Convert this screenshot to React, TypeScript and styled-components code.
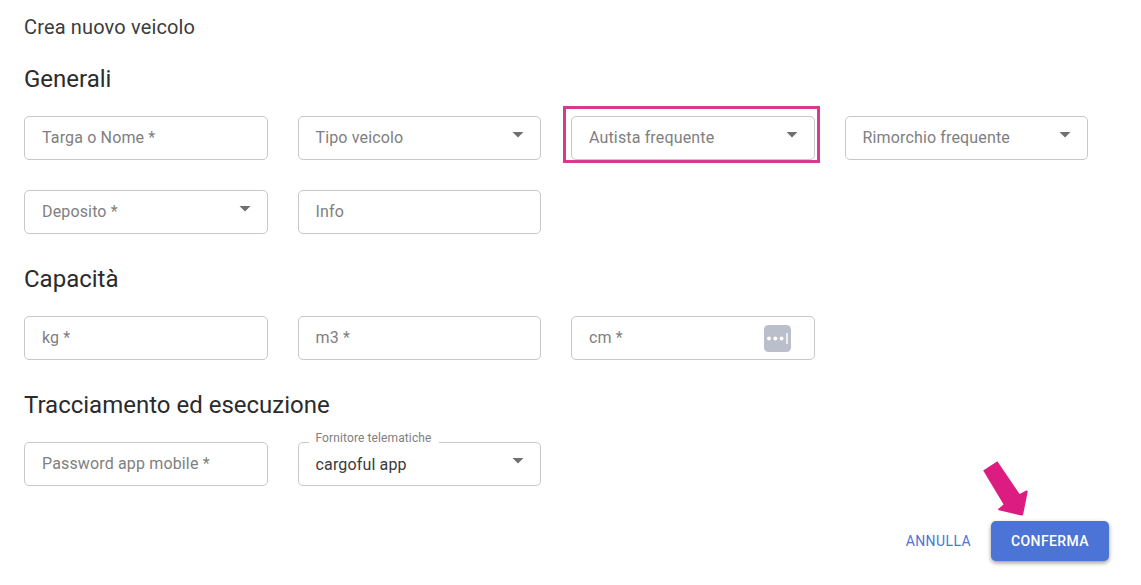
import React, { useId, useState } from "react";
import styled, { createGlobalStyle, css } from "styled-components";

const GlobalStyle = createGlobalStyle`
  *, *::before, *::after { box-sizing: border-box; }
  body {
    margin: 0;
    background: #fff;
    color: #2b2b2b;
    font-family: Roboto, "Liberation Sans", sans-serif;
  }
`;

const Form = styled.form`
  display: flex;
  flex-direction: column;
  padding: 15px 32px 24px 24px;
`;

const Title = styled.h1`
  margin: 0 0 25px;
  font-size: 20px;
  line-height: 24px;
  font-weight: 400;
  letter-spacing: 0.0075em;
  color: #3c3c3c;
`;

const Section = styled.section`
  margin: 0 21px 30px 0;
`;

const SectionTitle = styled.h2`
  margin: 0 0 22px;
  font-size: 24px;
  line-height: 30px;
  font-weight: 400;
`;

const Fields = styled.div`
  display: grid;
  grid-template-columns: repeat(4, minmax(0, 1fr));
  gap: 30px;
`;

const FieldBox = styled.div<{ $highlighted?: boolean }>`
  position: relative;
  display: grid;
  height: 44px;
  border: 1px solid #c8c8c8;
  border-radius: 5px;

  ${(p) =>
    p.$highlighted &&
    css`
      &::after {
        content: "";
        position: absolute;
        inset: -11px -6px -4px -9px;
        border: 3px solid #d9388f;
        pointer-events: none;
      }
    `}

  & > * {
    grid-area: 1 / 1;
  }
`;

const controlStyle = css`
  width: 100%;
  min-width: 0;
  padding: 0 17px;
  border: 0;
  outline: 0;
  border-radius: 4px;
  background: transparent;
  color: #3a3a3a;
  font: inherit;
  font-size: 16px;
  letter-spacing: 0.00938em;
`;

const TextInput = styled.input`
  ${controlStyle}
`;

const SelectInput = styled.select`
  ${controlStyle}
  appearance: none;
  cursor: pointer;
`;

const FieldLabel = styled.label<{ $floating: boolean }>`
  align-self: center;
  justify-self: start;
  margin-left: 17px;
  font-size: 16px;
  line-height: 20px;
  letter-spacing: 0.00938em;
  color: #808080;
  white-space: nowrap;
  pointer-events: none;

  ${(p) =>
    p.$floating &&
    css`
      position: absolute;
      top: -13px;
      left: 10px;
      margin: 0;
      padding: 0 7px;
      background: #fff;
      font-size: 12px;
      line-height: 16px;
    `}
`;

const Caret = styled.svg`
  align-self: start;
  justify-self: end;
  margin: 15px 16px 0 0;
  pointer-events: none;
`;

const PinBadge = styled.svg`
  align-self: center;
  justify-self: end;
  margin-right: 23px;
`;

const Actions = styled.div`
  display: flex;
  justify-content: flex-end;
  gap: 4px;
  margin-top: 5px;
`;

const Button = styled.button<{ $primary?: boolean }>`
  position: relative;
  height: 40px;
  padding: 0 ${(p) => (p.$primary ? 20 : 16)}px;
  border: 0;
  border-radius: 5px;
  background: ${(p) => (p.$primary ? "#4b74d6" : "transparent")};
  color: ${(p) => (p.$primary ? "#fff" : "#4b74d6")};
  box-shadow: ${(p) => (p.$primary ? "0 2px 4px rgba(0, 0, 0, 0.4)" : "none")};
  font: inherit;
  font-size: 14px;
  font-weight: ${(p) => (p.$primary ? 500 : 400)};
  letter-spacing: 0.02857em;
  text-transform: uppercase;
  cursor: pointer;
`;

const Pointer = styled.svg`
  position: absolute;
  left: -9px;
  bottom: 100%;
  margin-bottom: 5px;
  overflow: visible;
`;

type FieldProps = {
  label: string;
  required?: boolean;
  type?: string;
  options?: string[];
  initial?: string;
  highlighted?: boolean;
  badge?: boolean;
};

function Field({ label, required, type = "text", options, initial = "", highlighted, badge }: FieldProps) {
  const id = useId();
  const [value, setValue] = useState(initial);
  return (
    <FieldBox $highlighted={highlighted}>
      {options ? (
        <>
          <SelectInput id={id} required={required} value={value} onChange={(e) => setValue(e.target.value)}>
            <option value="" />
            {options.map((o) => (
              <option key={o}>{o}</option>
            ))}
          </SelectInput>
          <Caret width="12" height="6" viewBox="0 0 12 6" aria-hidden="true">
            <path d="M0.5 0h11L6 5.5z" fill="#707070" />
          </Caret>
        </>
      ) : (
        <TextInput id={id} type={type} required={required} value={value} onChange={(e) => setValue(e.target.value)} />
      )}
      <FieldLabel htmlFor={id} $floating={value !== ""}>
        {label}
        {required && " *"}
      </FieldLabel>
      {badge && (
        <PinBadge width="27" height="27" viewBox="0 0 27 27" aria-hidden="true">
          <rect width="27" height="27" rx="4.5" fill="#bbbfcb" />
          <g fill="#fff">
            <circle cx="5" cy="13.5" r="1.9" />
            <circle cx="11.3" cy="13.5" r="1.9" />
            <circle cx="17.6" cy="13.5" r="1.9" />
            <rect x="22.3" y="8" width="1.4" height="11" />
          </g>
        </PinBadge>
      )}
    </FieldBox>
  );
}

export default function App() {
  return (
    <>
      <GlobalStyle />
      <Form onSubmit={(e) => e.preventDefault()}>
        <Title>Crea nuovo veicolo</Title>

        <Section>
          <SectionTitle>Generali</SectionTitle>
          <Fields>
            <Field label="Targa o Nome" required />
            <Field label="Tipo veicolo" options={[]} />
            <Field label="Autista frequente" options={[]} highlighted />
            <Field label="Rimorchio frequente" options={[]} />
            <Field label="Deposito" required options={[]} />
            <Field label="Info" />
          </Fields>
        </Section>

        <Section>
          <SectionTitle>Capacità</SectionTitle>
          <Fields>
            <Field label="kg" required />
            <Field label="m3" required />
            <Field label="cm" required badge />
          </Fields>
        </Section>

        <Section>
          <SectionTitle>Tracciamento ed esecuzione</SectionTitle>
          <Fields>
            <Field label="Password app mobile" required type="password" />
            <Field label="Fornitore telematiche" options={["cargoful app"]} initial="cargoful app" />
          </Fields>
        </Section>

        <Actions>
          <Button type="button">Annulla</Button>
          <Button type="submit" $primary>
            Conferma
            <Pointer width="46" height="56" viewBox="0 0 46 56" aria-hidden="true">
              <path
                d="M1.2 10.6L15.4 1.2L37.6 34.1L43.8 30.7Q46 29.8 45.6 32.2L41.2 54.2Q40.8 55.8 39.2 55.4L17 50.2Q15 49.5 16.8 48.4L21.6 44.4Z"
                fill="#dc1c80"
              />
            </Pointer>
          </Button>
        </Actions>
      </Form>
    </>
  );
}
